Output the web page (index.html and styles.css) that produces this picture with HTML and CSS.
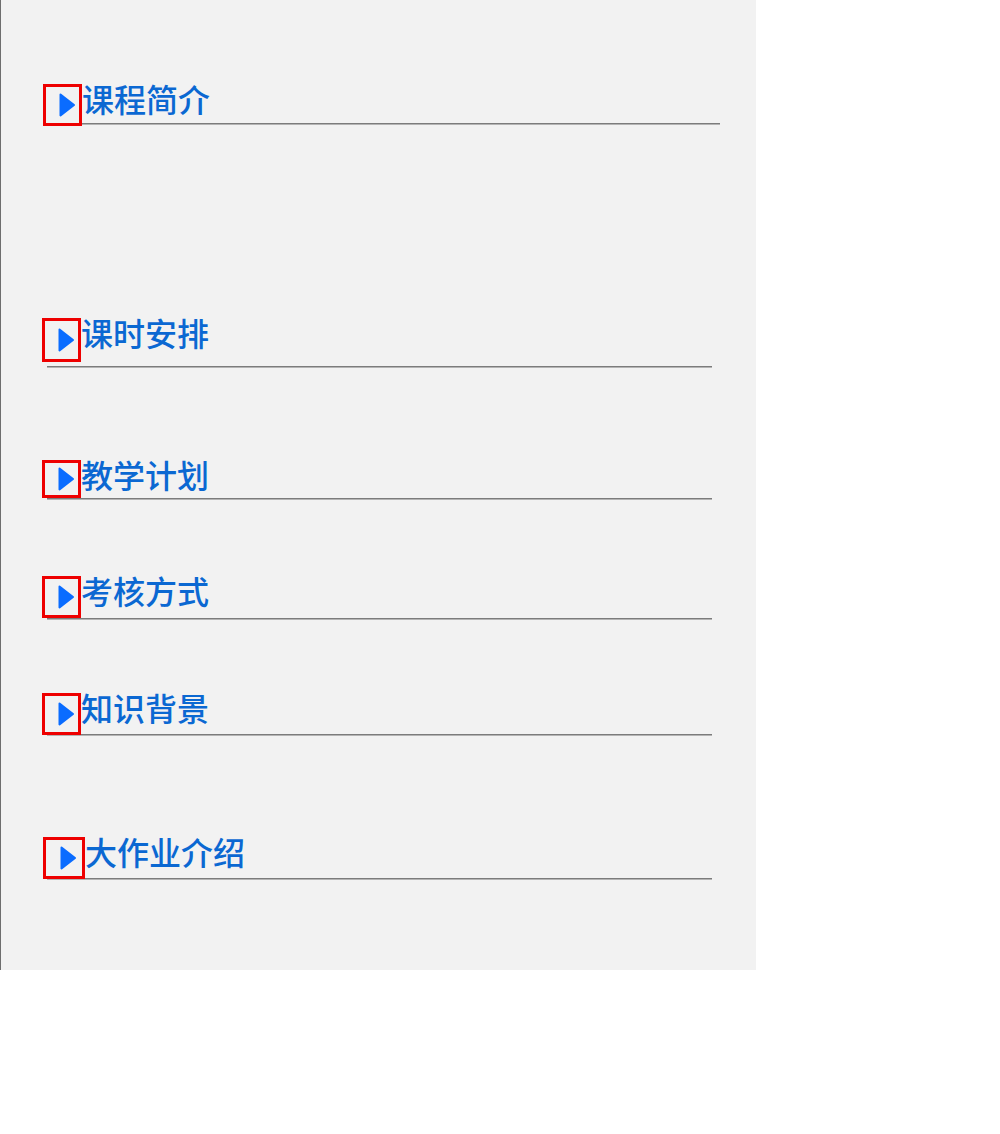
FILE: index.html
```html
<!DOCTYPE html>
<html lang="zh-CN">
<head>
<meta charset="utf-8">
<title>课程</title>
<link rel="stylesheet" href="styles.css">
</head>
<body>
<div class="panel">
  <div class="head head-first">
    <span class="ico"><svg viewBox="0 0 16 24" width="16" height="24"><path d="M1.5 1.5 L15 12 L1.5 22.5 Z" fill="#0a6cff" stroke="#0a6cff" stroke-width="2" stroke-linejoin="round"/></svg></span>
    <h2 class="title">课程简介</h2>
  </div>
  <div class="head s2">
    <span class="ico ico-tall"><svg viewBox="0 0 16 24" width="16" height="24"><path d="M1.5 1.5 L15 12 L1.5 22.5 Z" fill="#0a6cff" stroke="#0a6cff" stroke-width="2" stroke-linejoin="round"/></svg></span>
    <h2 class="title">课时安排</h2>
  </div>
  <div class="head s3">
    <span class="ico ico-short"><svg viewBox="0 0 16 24" width="16" height="24"><path d="M1.5 1.5 L15 12 L1.5 22.5 Z" fill="#0a6cff" stroke="#0a6cff" stroke-width="2" stroke-linejoin="round"/></svg></span>
    <h2 class="title">教学计划</h2>
  </div>
  <div class="head s4">
    <span class="ico"><svg viewBox="0 0 16 24" width="16" height="24"><path d="M1.5 1.5 L15 12 L1.5 22.5 Z" fill="#0a6cff" stroke="#0a6cff" stroke-width="2" stroke-linejoin="round"/></svg></span>
    <h2 class="title">考核方式</h2>
  </div>
  <div class="head s5">
    <span class="ico"><svg viewBox="0 0 16 24" width="16" height="24"><path d="M1.5 1.5 L15 12 L1.5 22.5 Z" fill="#0a6cff" stroke="#0a6cff" stroke-width="2" stroke-linejoin="round"/></svg></span>
    <h2 class="title">知识背景</h2>
  </div>
  <div class="head s6">
    <span class="ico ico-wide"><svg viewBox="0 0 16 24" width="16" height="24"><path d="M1.5 1.5 L15 12 L1.5 22.5 Z" fill="#0a6cff" stroke="#0a6cff" stroke-width="2" stroke-linejoin="round"/></svg></span>
    <h2 class="title">大作业介绍</h2>
  </div>
</div>
</body>
</html>
```

FILE: styles.css
```css
html, body {
  margin: 0;
  padding: 0;
  background: #ffffff;
}

.panel {
  box-sizing: border-box;
  width: 756px;
  height: 970px;
  padding-top: 84px;
  background: #f2f2f2;
  border-left: 1px solid #6e6e6e;
  overflow: hidden;
}

.head {
  display: flex;
  align-items: flex-start;
  box-sizing: content-box;
  width: 665px;
  height: 41px;
  margin-left: 46px;
  border-bottom: 1px solid #7c7c7c;
  box-shadow: 0 1px 0 #b4b4b4;
}

.head .ico {
  margin-left: -5px;
}

.head-first {
  width: auto;
  height: 42px;
  margin-left: 42px;
  border-bottom: none;
  box-shadow: none;
}

.head-first .ico {
  margin-left: 0;
}

.head-first .title {
  box-sizing: content-box;
  width: 638px;
  height: 39px;
  border-bottom: 1px solid #7c7c7c;
  box-shadow: 0 1px 0 #b4b4b4;
}

.s2 { margin-top: 192px; height: 48px; }
.s3 { margin-top: 93px; height: 38px; }
.s4 { margin-top: 77px; height: 42px; }
.s5 { margin-top: 74px; height: 41px; }
.s6 { margin-top: 102px; height: 41px; }

.ico {
  flex: none;
  box-sizing: border-box;
  width: 39px;
  height: 42px;
  border: 3px solid #ee0000;
  display: flex;
  align-items: center;
  padding-left: 13px;
}

.ico svg {
  display: block;
}

.ico-tall { height: 44px; }
.ico-short { height: 38px; }
.ico-wide { width: 42px; padding-left: 14px; margin-left: -4px !important; }

.title {
  margin: 0;
  padding-left: 0;
  font-family: "Noto Sans CJK SC", sans-serif;
  font-size: 32px;
  font-weight: 500;
  line-height: 29px;
  color: #0b68d2;
  white-space: nowrap;
}
```
